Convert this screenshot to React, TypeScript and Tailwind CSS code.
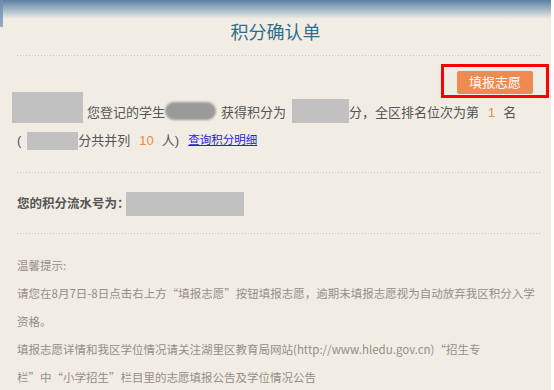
import React from 'react';

const FONT = "font-['Liberation_Sans','Noto_Sans_CJK_SC',sans-serif]";

function Dots() {
  return <div className="h-px w-full bg-[linear-gradient(to_right,#c9c6bf_1px,transparent_1px)] bg-[length:3px_1px]" />;
}

const TIPS = [
  '温馨提示:',
  '请您在8月7日-8日点击右上方“填报志愿”按钮填报志愿，逾期未填报志愿视为自动放弃我区积分入学',
  '资格。',
  '填报志愿详情和我区学位情况请关注湖里区教育局网站(http://www.hledu.gov.cn)“招生专',
  '栏”中“小学招生”栏目里的志愿填报公告及学位情况公告',
];

export default function App() {
  return (
    <div className={`flex h-[390px] w-[554px] overflow-hidden bg-white ${FONT}`}>
      <div className="w-[551px] shrink-0 pl-[17px] pr-[10px] [background:linear-gradient(to_bottom,#6a8db0,#93afc6)_0_0/3px_27px_no-repeat,linear-gradient(to_bottom,#5a80a2_0px,#9fb4c4_9px,#f1ede4_19px)]">
        <h1 className="pt-[21px] text-center text-[18px] leading-[24px] text-[#2d6d8e] -ml-[7px]">积分确认单</h1>

        <div className="mt-[10px]">
          <Dots />
        </div>

        <div className="flex h-[36px] justify-end pt-[8px] -mr-[8px]">
          <div className="flex h-[34px] w-[108px] justify-center border-[3px] border-[#ff0000] pt-[4px]">
            <button className="h-[23px] w-[76px] rounded-[2px] bg-[#ef8a50] text-[13px] text-white">填报志愿</button>
          </div>
        </div>

        <div className="flex items-end text-[13px] leading-[20px] text-[#555] -ml-[5px]">
          <span className="h-[31px] w-[71px] bg-[#c1c1c1]" />
          <span className="ml-[4px]">您登记的学生</span>
          <span className="mb-[3px] h-[18px] w-[51px] rounded-full bg-[#9a9a9a] blur-[1px]" />
          <span className="ml-[5px]">获得积分为</span>
          <span className="ml-[6px] h-[24px] w-[57px] bg-[#c1c1c1]" />
          <span>分，全区排名位次为第</span>
          <span className="ml-[9px] text-[#f08a3c]">1</span>
          <span className="ml-[8px]">名</span>
        </div>

        <div className="mt-[9px] flex h-[18px] items-center text-[13px] text-[#555]">
          <span>(</span>
          <span className="ml-[6px] h-[18px] w-[51px] bg-[#c1c1c1]" />
          <span>分共并列</span>
          <span className="ml-[9px] text-[#f08a3c]">10</span>
          <span className="ml-[8px]">人)</span>
          <a href="#" className="ml-[9px] text-[11.5px] text-[#2424d6] underline">查询积分明细</a>
        </div>

        <div className="mt-[22px]">
          <Dots />
        </div>

        <div className="mt-[19px] flex h-[24px] items-center text-[12.5px] font-bold text-[#555]">
          <span>您的积分流水号为：</span>
          <span className="-ml-[4px] h-[24px] w-[118px] bg-[#c1c1c1]" />
        </div>

        <div className="mt-[17px]">
          <Dots />
        </div>

        <div className="mt-[17px] font-['Noto_Sans_CJK_SC',sans-serif] text-[11.5px] leading-[28px] text-[#938f88]">
          {TIPS.map((t, i) => (
            <p key={i} className="whitespace-nowrap">{t}</p>
          ))}
        </div>
      </div>
    </div>
  );
}
